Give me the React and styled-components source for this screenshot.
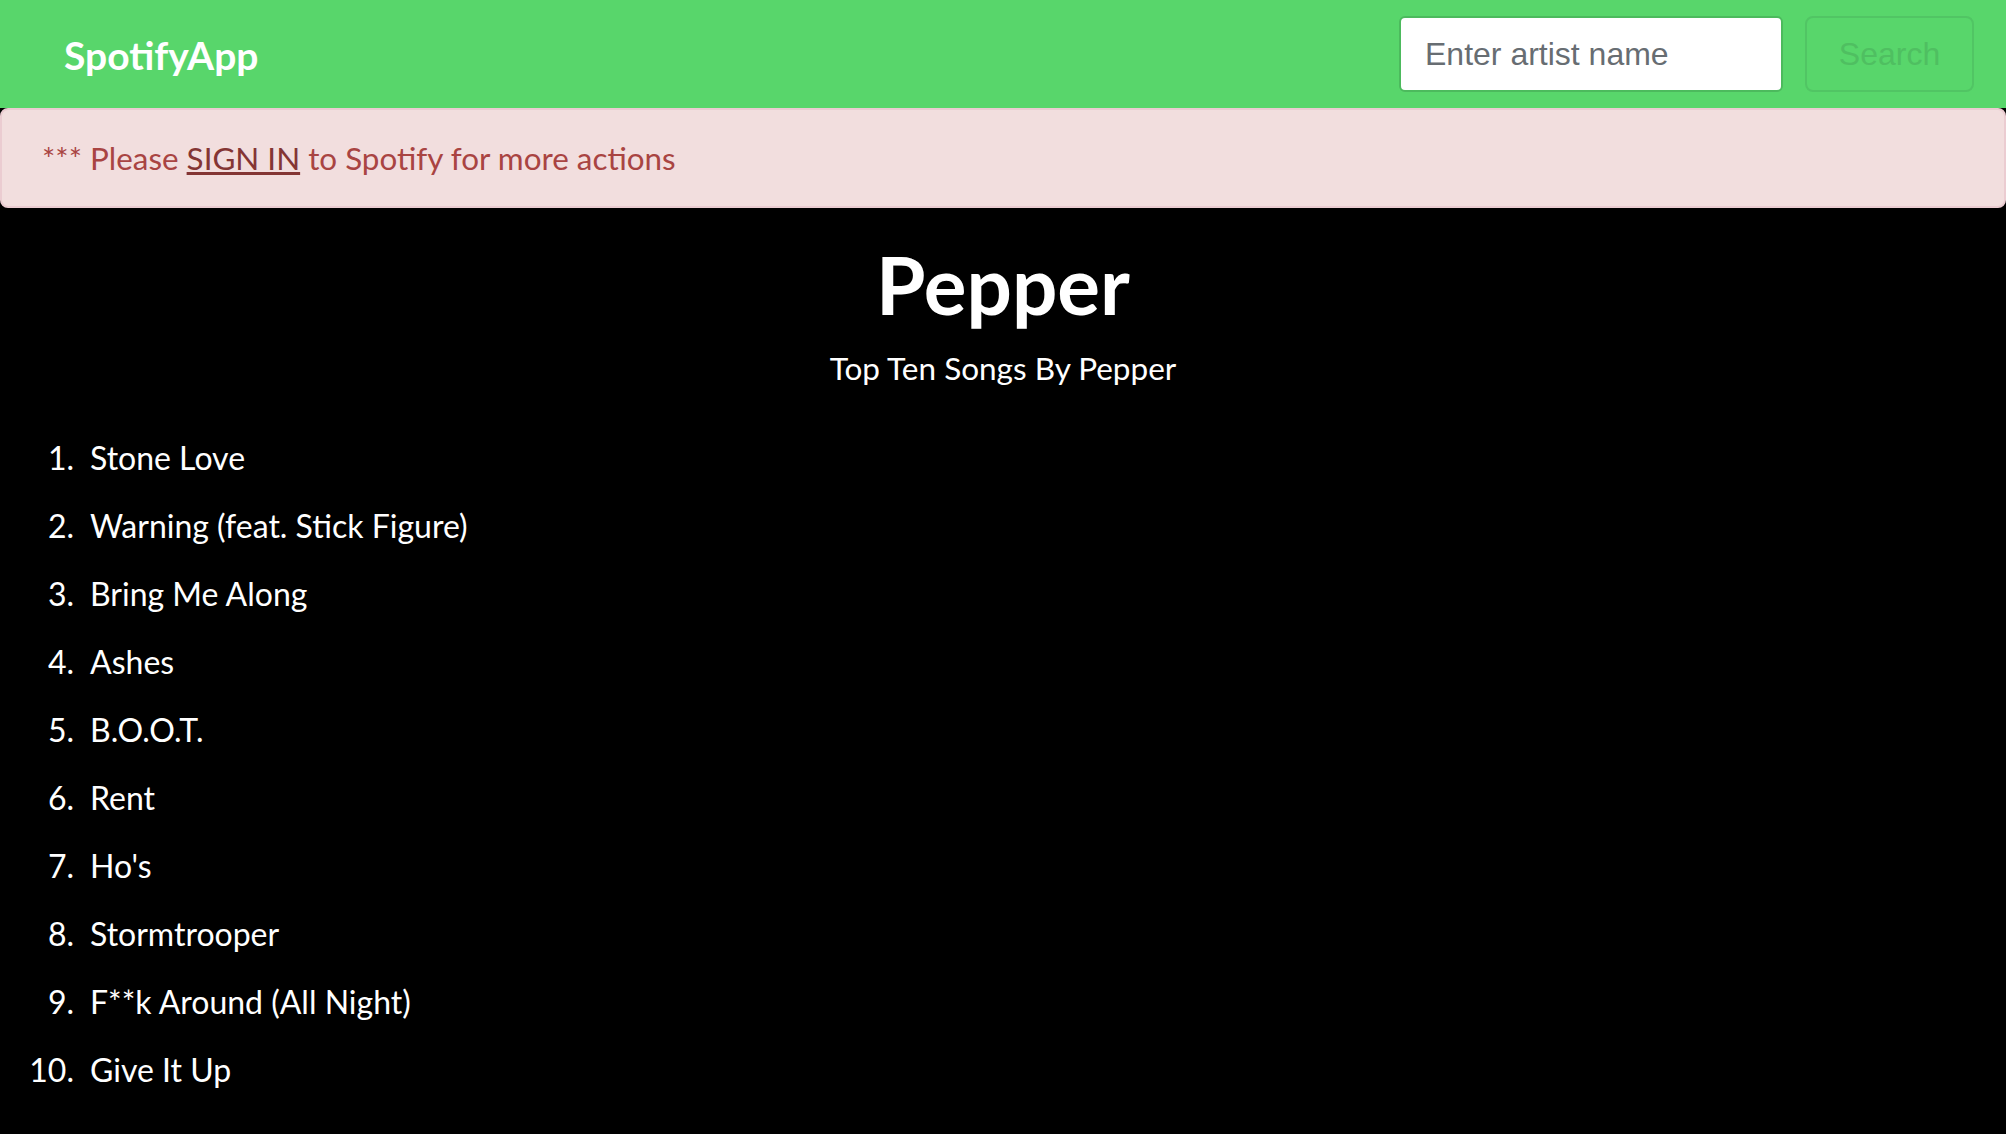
import React from "react";
import styled, { createGlobalStyle } from "styled-components";

const GlobalStyle = createGlobalStyle`
  body {
    margin: 0;
    background: #000;
    font-family: Lato, "Open Sans", sans-serif;
  }
`;

const songs = [
  "Stone Love",
  "Warning (feat. Stick Figure)",
  "Bring Me Along",
  "Ashes",
  "B.O.O.T.",
  "Rent",
  "Ho's",
  "Stormtrooper",
  "F**k Around (All Night)",
  "Give It Up",
];

const App = () => {
  return (
    <>
      <GlobalStyle />
      <StyledNav>
        <span className="brand">SpotifyApp</span>
        <form className="search" onSubmit={(e) => e.preventDefault()}>
          <input type="text" placeholder="Enter artist name" />
          <button type="submit" disabled>
            Search
          </button>
        </form>
      </StyledNav>
      <StyledAlert>
        *** Please <a href="#signin">SIGN IN</a> to Spotify for more actions
      </StyledAlert>
      <StyledArtist>
        <h1 className="name">Pepper</h1>
        <p className="subtitle">Top Ten Songs By Pepper</p>
        <ol className="songs">
          {songs.map((song) => (
            <li key={song}>{song}</li>
          ))}
        </ol>
      </StyledArtist>
    </>
  );
};

const StyledNav = styled.nav`
  display: flex;
  align-items: center;
  justify-content: space-between;
  height: 108px;
  padding: 0 32px 0 64px;
  background: #58d66b;

  .brand {
    color: #fff;
    font-weight: 700;
    font-size: 39px;
    margin-top: 2px;
  }

  .search {
    display: flex;
    align-items: center;
    gap: 22px;
  }

  input {
    box-sizing: border-box;
    width: 384px;
    height: 76px;
    padding: 0 24px;
    border: 2px solid #4cba5d;
    border-radius: 6px;
    background: #fff;
    font-family: "Liberation Sans", Arial, sans-serif;
    font-size: 32px;
    color: #333;
    outline: none;
  }

  input::placeholder {
    color: #676d72;
  }

  button {
    box-sizing: border-box;
    width: 169px;
    height: 76px;
    border: 2px solid #51c564;
    border-radius: 8px;
    background: transparent;
    font-family: "Liberation Sans", Arial, sans-serif;
    font-size: 32px;
    color: #4fbf61;
  }
`;

const StyledAlert = styled.div`
  box-sizing: border-box;
  height: 100px;
  padding: 0 40px;
  background: #f2dede;
  border: 2px solid #ebccd1;
  border-radius: 8px;
  color: #a94442;
  font-size: 31.4px;
  line-height: 96px;

  a {
    color: #843534;
    text-decoration: underline;
  }
`;

const StyledArtist = styled.main`
  color: #fff;

  .name {
    margin: 32px 0 0;
    text-align: center;
    font-size: 80px;
    font-weight: 700;
    line-height: 88px;
  }

  .subtitle {
    margin: 19px 0 0;
    text-align: center;
    font-size: 31.5px;
    line-height: 42px;
  }

  .songs {
    margin: 35px 0 0;
    padding: 0;
    list-style: none;
    counter-reset: song;
    font-size: 32px;
  }

  .songs li {
    display: flex;
    line-height: 68px;
    counter-increment: song;
  }

  .songs li::before {
    content: counter(song) ".";
    width: 74px;
    margin-right: 16px;
    text-align: right;
    flex-shrink: 0;
  }
`;

export default App;
